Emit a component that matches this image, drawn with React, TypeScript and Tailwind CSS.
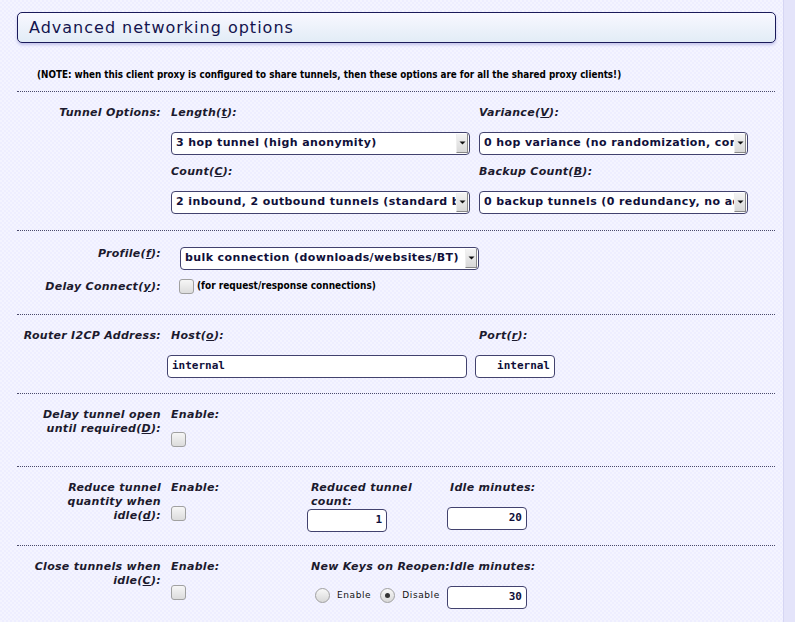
import React from "react";

const sans = "font-['DejaVu_Sans',Verdana,sans-serif]";
const cond = "font-['DejaVu_Sans_Condensed','Open_Sans',sans-serif]";

function Lbl({ children, className = "" }: { children: React.ReactNode; className?: string }) {
  return (
    <div className={`${sans} text-[11px] leading-[14px] font-bold italic text-[#1c1a2e] tracking-[0.3px] ${className}`}>
      {children}
    </div>
  );
}

function Select({ value, width }: { value: string; width: string }) {
  return (
    <div className={`${width} h-[23px] flex items-center bg-white border border-[#42426e] rounded-[4px] overflow-hidden`}>
      <span className={`${sans} flex-1 min-w-0 pl-[4px] text-[11px] font-bold text-[#10103a] tracking-[0.4px] whitespace-nowrap overflow-hidden`}>
        {value}
      </span>
      <div className="w-[12px] h-[19px] mr-[1px] shrink-0 flex items-center justify-center bg-gradient-to-b from-[#f4f4f4] to-[#d8d8d8] border-r border-b border-[#888] border-l border-l-[#eee]">
        <svg width="7" height="4" viewBox="0 0 7 4">
          <path d="M0.5 0.5h6L3.5 3.5z" fill="#111" />
        </svg>
      </div>
    </div>
  );
}

function Input({ value, width, right = false }: { value: string; width: string; right?: boolean }) {
  return (
    <div
      className={`${width} h-[23px] flex items-center bg-white border border-[#42426e] rounded-[4px] px-[4px] ${right ? "justify-end" : ""} font-['DejaVu_Sans_Mono',monospace] text-[11px] font-bold text-[#10103a]`}
    >
      {value}
    </div>
  );
}

function Check() {
  return <div className="w-[15px] h-[15px] rounded-[3px] border border-[#a0a0a0] bg-gradient-to-b from-[#f6f6f6] to-[#dcdcdc]" />;
}

function Radio({ checked = false }: { checked?: boolean }) {
  return (
    <div className="w-[15px] h-[15px] rounded-full border border-[#a0a0a0] bg-gradient-to-b from-[#f8f8f8] to-[#d8d8d8] flex items-center justify-center">
      {checked && <div className="w-[5px] h-[5px] rounded-full bg-[#333]" />}
    </div>
  );
}

function Sep() {
  return <div className="border-t border-dotted border-[#4a4a6a] w-[758px]" />;
}

const u = (c: string) => <span className="underline">{c}</span>;

export default function App() {
  return (
    <div className="w-[795px] h-[622px] overflow-hidden flex bg-[repeating-conic-gradient(#eeeeff_0_25%,#f4f4ff_0_50%)] bg-[length:4px_4px]">
      <div className="w-[783px] pl-[17px] pt-[12px]">
        {/* title */}
        <div className="w-[759px] h-[31px] flex items-center pl-[11px] border border-[#1a1a5a] rounded-[5px] bg-gradient-to-b from-[#f8f8ff] to-[#e2ecf6] shadow-[0_2px_3px_#c4c4ec]">
          <span className={`${sans} text-[16px] tracking-[1px] text-[#14144e]`}>Advanced networking options</span>
        </div>

        <div className={`${cond} text-[9.8px] font-bold text-black pl-[20px] mt-[26px] h-[22px] leading-[12px] whitespace-nowrap`}>
          (NOTE: when this client proxy is configured to share tunnels, then these options are for all the shared proxy clients!)
        </div>
        <Sep />

        {/* tunnel options */}
        <div className="flex h-[138px]">
          <Lbl className="w-[144px] text-right pt-[14px]">Tunnel Options:</Lbl>
          <div className="w-[311px] pl-[10px] flex flex-col">
            <Lbl className="mt-[14px]">Length({u("t")}):</Lbl>
            <div className="mt-[12px]">
              <Select width="w-[299px]" value="3 hop tunnel (high anonymity)" />
            </div>
            <Lbl className="mt-[10px]">Count({u("C")}):</Lbl>
            <div className="mt-[12px]">
              <Select width="w-[299px]" value="2 inbound, 2 outbound tunnels (standard bandwidth usage, standard reliability)" />
            </div>
          </div>
          <div className="flex flex-col pl-[7px]">
            <Lbl className="mt-[14px]">Variance({u("V")}):</Lbl>
            <div className="mt-[12px]">
              <Select width="w-[269px]" value="0 hop variance (no randomization, consistent performance)" />
            </div>
            <Lbl className="mt-[10px]">Backup Count({u("B")}):</Lbl>
            <div className="mt-[12px]">
              <Select width="w-[269px]" value="0 backup tunnels (0 redundancy, no added resource usage)" />
            </div>
          </div>
        </div>
        <Sep />

        {/* profile */}
        <div className="h-[83px] pt-[16px]">
          <div className="flex">
            <Lbl className="w-[144px] text-right leading-[12px]">Profile({u("f")}):</Lbl>
            <div className="pl-[19px]">
              <Select width="w-[299px]" value="bulk connection (downloads/websites/BT)" />
            </div>
          </div>
          <div className="flex items-center mt-[9px]">
            <Lbl className="w-[144px] text-right">Delay Connect({u("y")}):</Lbl>
            <div className="pl-[18px]">
              <Check />
            </div>
            <span className={`${cond} text-[10px] font-bold text-black ml-[3px] -mt-[3px]`}>(for request/response connections)</span>
          </div>
        </div>
        <Sep />

        {/* router i2cp */}
        <div className="flex h-[78px]">
          <Lbl className="w-[144px] text-right pt-[14px]">Router I2CP Address:</Lbl>
          <div className="w-[314px] pl-[6px] flex flex-col">
            <Lbl className="mt-[14px] pl-[4px]">Host({u("o")}):</Lbl>
            <div className="mt-[12px]">
              <Input width="w-[300px]" value="internal" />
            </div>
          </div>
          <div className="flex flex-col">
            <Lbl className="mt-[14px] pl-[4px]">Port({u("r")}):</Lbl>
            <div className="mt-[12px]">
              <Input width="w-[80px]" value="internal" right />
            </div>
          </div>
        </div>
        <Sep />

        {/* delay tunnel open */}
        <div className="flex h-[72px]">
          <Lbl className="w-[144px] text-right pt-[14px]">
            Delay tunnel open
            <br />
            until required({u("D")}):
          </Lbl>
          <div className="pl-[10px] flex flex-col">
            <Lbl className="mt-[14px]">Enable:</Lbl>
            <div className="mt-[10px]">
              <Check />
            </div>
          </div>
        </div>
        <Sep />

        {/* reduce quantity */}
        <div className="flex h-[78px]">
          <Lbl className="w-[144px] text-right pt-[14px] leading-[13.5px]">
            Reduce tunnel
            <br />
            quantity when
            <br />
            idle({u("d")}):
          </Lbl>
          <div className="w-[146px] pl-[10px] flex flex-col">
            <Lbl className="mt-[14px] leading-[13.5px]">Enable:</Lbl>
            <div className="mt-[11px]">
              <Check />
            </div>
          </div>
          <div className="w-[140px] flex flex-col">
            <Lbl className="mt-[14px] pl-[4px] leading-[13px]">
              Reduced tunnel
              <br />
              count:
            </Lbl>
            <div className="mt-[0px]">
              <Input width="w-[80px]" value="1" right />
            </div>
          </div>
          <div className="flex flex-col">
            <Lbl className="mt-[14px] pl-[3px] leading-[13.5px]">Idle minutes:</Lbl>
            <div className="mt-[12px]">
              <Input width="w-[80px]" value="20" right />
            </div>
          </div>
        </div>
        <Sep />

        {/* close when idle */}
        <div className="flex h-[80px]">
          <Lbl className="w-[144px] text-right pt-[14px]">
            Close tunnels when
            <br />
            idle({u("C")}):
          </Lbl>
          <div className="w-[146px] pl-[10px] flex flex-col">
            <Lbl className="mt-[14px]">Enable:</Lbl>
            <div className="mt-[11px]">
              <Check />
            </div>
          </div>
          <div className="w-[140px] flex flex-col">
            <Lbl className="mt-[14px] pl-[4px] whitespace-nowrap">New Keys on Reopen:</Lbl>
            <div className="mt-[14px] flex items-center pl-[8px]">
              <Radio />
              <span className={`${sans} text-[9px] tracking-[0.6px] text-[#111] ml-[7px]`}>Enable</span>
              <div className="ml-[9px]">
                <Radio checked />
              </div>
              <span className={`${sans} text-[9px] tracking-[0.6px] text-[#111] ml-[7px]`}>Disable</span>
            </div>
          </div>
          <div className="flex flex-col">
            <Lbl className="mt-[14px] pl-[3px]">Idle minutes:</Lbl>
            <div className="mt-[12px]">
              <Input width="w-[80px]" value="30" right />
            </div>
          </div>
        </div>
      </div>
      <div className="flex-1 bg-[#e4e4fa] border-l border-[#d6d6f4]" />
    </div>
  );
}
